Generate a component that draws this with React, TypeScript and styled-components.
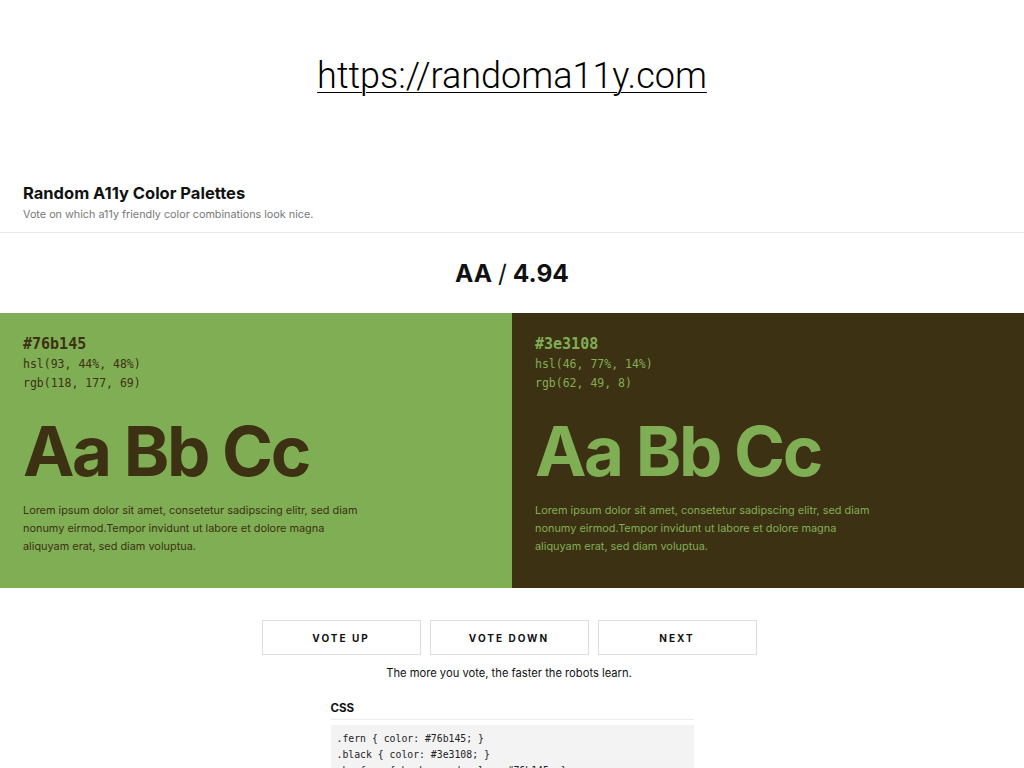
import React from "react";
import styled, { createGlobalStyle } from "styled-components";

const Global = createGlobalStyle`
  html, body { margin: 0; padding: 0; background: #ffffff; }
  body { font-family: Inter, "Liberation Sans", sans-serif; color: #111; overflow: hidden; }
`;

const Page = styled.div`
  width: 1024px;
  height: 768px;
  overflow: hidden;
  display: flex;
  flex-direction: column;
  & > * { flex-shrink: 0; }
`;

const UrlBar = styled.div`
  height: 170px;
  display: flex;
  justify-content: center;
  align-items: flex-start;
  padding-top: 54px;
  box-sizing: border-box;
`;

const Url = styled.a`
  font-family: Roboto, "Liberation Sans", sans-serif;
  font-weight: 300;
  font-size: 36px;
  line-height: 44px;
  color: #000;
  text-decoration: underline;
  text-decoration-thickness: 1px;
  text-underline-offset: 4px;
`;

const Header = styled.header`
  height: 63px;
  padding: 13px 23px 0;
  box-sizing: border-box;
  border-bottom: 1px solid #e9e9e9;
`;

const Title = styled.h1`
  margin: 0;
  font-size: 16.5px;
  font-weight: 700;
  line-height: 20px;
  color: #111;
`;

const Subtitle = styled.p`
  margin: 5px 0 0;
  font-size: 10.8px;
  line-height: 14px;
  color: #777;
`;

const Ratio = styled.div`
  height: 80px;
  display: flex;
  align-items: center;
  justify-content: center;
  font-size: 24.5px;
  font-weight: 700;
  color: #111;
  box-sizing: border-box;
`;

const Slash = styled.span`
  font-weight: 400;
  margin: 0 6px;
`;

const Panels = styled.div`
  display: grid;
  grid-template-columns: 512px 512px;
  height: 275px;
`;

const Panel = styled.section<{ $bg: string; $fg: string }>`
  background: ${(p) => p.$bg};
  color: ${(p) => p.$fg};
  padding: 21px 23px 0;
  box-sizing: border-box;
`;

const Hex = styled.div`
  font-family: "DejaVu Sans Mono", "Liberation Mono", monospace;
  font-size: 15px;
  font-weight: 700;
  line-height: 21px;
`;

const Mono = styled.div`
  font-family: "DejaVu Sans Mono", "Liberation Mono", monospace;
  font-size: 11.5px;
  line-height: 19px;
`;

const Specimen = styled.div`
  font-size: 69px;
  font-weight: 700;
  line-height: 84px;
  margin-top: 16px;
  letter-spacing: -2.4px;
`;

const Lorem = styled.p`
  margin: 9px 0 0;
  font-size: 10.9px;
  line-height: 17.8px;
  width: 345px;
`;

const Controls = styled.div`
  display: flex;
  justify-content: center;
  gap: 9px;
  margin-top: 32px;
  padding-right: 6px;
`;

const Button = styled.button`
  width: 159px;
  height: 35px;
  background: #fff;
  border: 1px solid #dedede;
  font-family: Inter, "Liberation Sans", sans-serif;
  font-size: 10px;
  font-weight: 700;
  letter-spacing: 2px;
  color: #111;
  padding: 0;
  box-sizing: border-box;
`;

const Tagline = styled.p`
  margin: 9px 0 0;
  text-align: center;
  font-size: 11.2px;
  line-height: 18px;
  color: #111;
  padding-right: 6px;
`;

const CssSection = styled.div`
  width: 363px;
  margin: 18px auto 0;
`;

const CssHeading = styled.h2`
  margin: 0;
  font-size: 11.5px;
  font-weight: 700;
  line-height: 16px;
  padding-bottom: 3px;
  border-bottom: 1px solid #ececec;
  color: #111;
`;

const Code = styled.pre`
  margin: 5px 0 0;
  background: #f3f3f3;
  padding: 6px 6px;
  font-family: "DejaVu Sans Mono", "Liberation Mono", monospace;
  font-size: 9.8px;
  line-height: 16px;
  color: #222;
`;

const palettes = [
  { bg: "#80ae55", fg: "#3d3113", hex: "#76b145", hsl: "hsl(93, 44%, 48%)", rgb: "rgb(118, 177, 69)" },
  { bg: "#3d3113", fg: "#80ae55", hex: "#3e3108", hsl: "hsl(46, 77%, 14%)", rgb: "rgb(62, 49, 8)" },
];

export default function App() {
  return (
    <Page>
      <Global />
      <UrlBar>
        <Url href="#">https://randoma11y.com</Url>
      </UrlBar>
      <Header>
        <Title>Random A11y Color Palettes</Title>
        <Subtitle>Vote on which a11y friendly color combinations look nice.</Subtitle>
      </Header>
      <Ratio>
        AA<Slash>/</Slash>4.94
      </Ratio>
      <Panels>
        {palettes.map((p) => (
          <Panel key={p.hex} $bg={p.bg} $fg={p.fg}>
            <Hex>{p.hex}</Hex>
            <Mono>{p.hsl}</Mono>
            <Mono>{p.rgb}</Mono>
            <Specimen>Aa Bb Cc</Specimen>
            <Lorem>
              Lorem ipsum dolor sit amet, consetetur sadipscing elitr, sed diam nonumy eirmod.Tempor
              invidunt ut labore et dolore magna aliquyam erat, sed diam voluptua.
            </Lorem>
          </Panel>
        ))}
      </Panels>
      <Controls>
        <Button>VOTE UP</Button>
        <Button>VOTE DOWN</Button>
        <Button>NEXT</Button>
      </Controls>
      <Tagline>The more you vote, the faster the robots learn.</Tagline>
      <CssSection>
        <CssHeading>CSS</CssHeading>
        <Code>{`.fern { color: #76b145; }
.black { color: #3e3108; }
.bg-fern { background-color: #76b145; }`}</Code>
      </CssSection>
    </Page>
  );
}
